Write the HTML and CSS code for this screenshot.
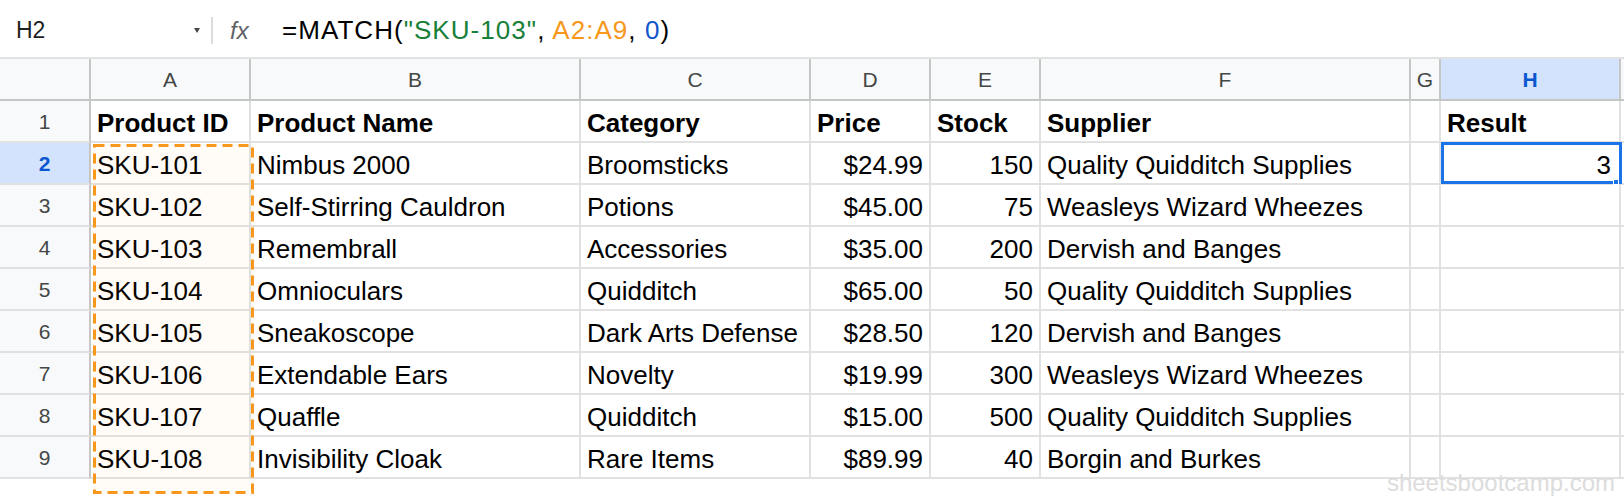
FILE: index.html
```html
<!DOCTYPE html>
<html>
<head>
<meta charset="utf-8">
<link rel="stylesheet" href="styles.css">
</head>
<body>
<div class="page">
  <div class="formula-bar">
    <div class="namebox"><span class="cellref">H2</span><span class="caret"></span></div>
    <div class="sep"></div>
    <div class="fx">fx</div>
    <div class="formula">=MATCH(<span class="f-str">"SKU-103"</span>, <span class="f-rng">A2:A9</span>, <span class="f-num">0</span>)</div>
  </div>
  <div class="sheet">
    <div class="hc corner"></div>
    <div class="hc">A</div><div class="hc">B</div><div class="hc">C</div><div class="hc">D</div><div class="hc">E</div><div class="hc">F</div><div class="hc">G</div><div class="hc sel">H</div><div class="hc rest"></div>

    <div class="rh">1</div>
    <div class="c b">Product ID</div><div class="c b">Product Name</div><div class="c b">Category</div><div class="c b">Price</div><div class="c b">Stock</div><div class="c b">Supplier</div><div class="c"></div><div class="c b">Result</div><div class="c"></div>

    <div class="rh sel">2</div>
    <div class="c">SKU-101</div><div class="c">Nimbus 2000</div><div class="c">Broomsticks</div><div class="c r">$24.99</div><div class="c r">150</div><div class="c">Quality Quidditch Supplies</div><div class="c"></div><div class="c r active">3<span class="handle"></span></div><div class="c"></div>

    <div class="rh">3</div>
    <div class="c">SKU-102</div><div class="c">Self-Stirring Cauldron</div><div class="c">Potions</div><div class="c r">$45.00</div><div class="c r">75</div><div class="c">Weasleys Wizard Wheezes</div><div class="c"></div><div class="c"></div><div class="c"></div>

    <div class="rh">4</div>
    <div class="c">SKU-103</div><div class="c">Remembrall</div><div class="c">Accessories</div><div class="c r">$35.00</div><div class="c r">200</div><div class="c">Dervish and Banges</div><div class="c"></div><div class="c"></div><div class="c"></div>

    <div class="rh">5</div>
    <div class="c">SKU-104</div><div class="c">Omnioculars</div><div class="c">Quidditch</div><div class="c r">$65.00</div><div class="c r">50</div><div class="c">Quality Quidditch Supplies</div><div class="c"></div><div class="c"></div><div class="c"></div>

    <div class="rh">6</div>
    <div class="c">SKU-105</div><div class="c">Sneakoscope</div><div class="c">Dark Arts Defense</div><div class="c r">$28.50</div><div class="c r">120</div><div class="c">Dervish and Banges</div><div class="c"></div><div class="c"></div><div class="c"></div>

    <div class="rh">7</div>
    <div class="c">SKU-106</div><div class="c">Extendable Ears</div><div class="c">Novelty</div><div class="c r">$19.99</div><div class="c r">300</div><div class="c">Weasleys Wizard Wheezes</div><div class="c"></div><div class="c"></div><div class="c"></div>

    <div class="rh">8</div>
    <div class="c">SKU-107</div><div class="c">Quaffle</div><div class="c">Quidditch</div><div class="c r">$15.00</div><div class="c r">500</div><div class="c">Quality Quidditch Supplies</div><div class="c"></div><div class="c"></div><div class="c"></div>

    <div class="rh">9</div>
    <div class="c">SKU-108</div><div class="c">Invisibility Cloak</div><div class="c">Rare Items</div><div class="c r">$89.99</div><div class="c r">40</div><div class="c">Borgin and Burkes</div><div class="c"></div><div class="c"></div><div class="c"></div>

    <div class="range">
      <svg width="161" height="350" viewBox="0 0 161 350"><rect x="1.5" y="1.5" width="158" height="347" fill="none" stroke="#f7981d" stroke-width="3" stroke-dasharray="10 6"/></svg>
    </div>
  </div>
  <div class="watermark">sheetsbootcamp.com</div>
</div>
</body>
</html>
```
FILE: styles.css
```css
* { box-sizing: border-box; }
html, body { margin: 0; padding: 0; background: #fff; }
body { font-family: "Liberation Sans", Arial, sans-serif; color: #000; }
.page { position: relative; width: 1624px; height: 502px; overflow: hidden; }

.formula-bar {
  height: 59px;
  padding-top: 4px;
  border-bottom: 2px solid #e1e1e1;
  display: flex;
  align-items: center;
}
.namebox {
  width: 211px;
  padding: 0 11px 0 16px;
  display: flex;
  align-items: center;
  justify-content: space-between;
}
.cellref { font-size: 23px; color: #1f1f1f; }
.caret {
  width: 0; height: 0;
  border-left: 3.5px solid transparent;
  border-right: 3.5px solid transparent;
  border-top: 5px solid #444746;
}
.sep { width: 2px; height: 27px; background: #dadce0; }
.fx {
  margin-left: 17px;
  font-style: italic;
  font-size: 24px;
  color: #5f6368;
  width: 20px;
}
.formula {
  margin-left: 32px;
  font-size: 26px;
  letter-spacing: 1.05px;
  color: #000;
}
.f-str { color: #188038; }
.f-rng { color: #f7981d; }
.f-num { color: #1155cc; }

.sheet {
  position: relative;
  display: grid;
  grid-template-columns: 91px 160px 330px 230px 120px 110px 370px 30px 180px 1fr;
  grid-auto-rows: 42px;
}
.hc {
  background: #f8f9fa;
  border-right: 2px solid #c4c7c5;
  border-bottom: 2px solid #c4c7c5;
  font-size: 21px;
  color: #444746;
  text-align: center;
  line-height: 40px;
  padding-top: 1px;
}
.hc.sel { background: #d3e3fd; color: #0b57d0; font-weight: bold; }
.hc.rest { border-right: none; }
.rh {
  background: #f8f9fa;
  border-right: 2px solid #c4c7c5;
  border-bottom: 2px solid #e1e1e1;
  font-size: 21px;
  color: #444746;
  text-align: center;
  line-height: 40px;
  padding-top: 1px;
}
.rh.sel { background: #d3e3fd; color: #0b57d0; font-weight: bold; }
.c {
  border-right: 2px solid #e1e1e1;
  border-bottom: 2px solid #e1e1e1;
  font-size: 26px;
  line-height: 30px;
  padding: 0 6px 3px 6px;
  display: flex;
  align-items: flex-end;
  white-space: nowrap;
  overflow: visible;
}
.c.b { font-weight: bold; }
.c.r { justify-content: flex-end; }
.c.active { position: relative; padding-right: 8px; }
.c.active::after {
  content: "";
  position: absolute;
  left: 0; top: -1px; right: -3px; bottom: -1px;
  border: 3px solid #1a73e8;
}
.handle {
  position: absolute;
  right: 0; bottom: -2px;
  width: 6px; height: 6px;
  background: #1a73e8;
  border: 1px solid #fff;
  z-index: 2;
}
.range {
  position: absolute;
  left: 93px; top: 85px;
  width: 161px; height: 350px;
  background: rgba(247, 152, 29, 0.035);
}
.range svg { display: block; }
.watermark {
  position: absolute;
  right: 9px; top: 471px;
  font-size: 24px;
  line-height: 24px;
  color: #dcdcdc;
}
```
